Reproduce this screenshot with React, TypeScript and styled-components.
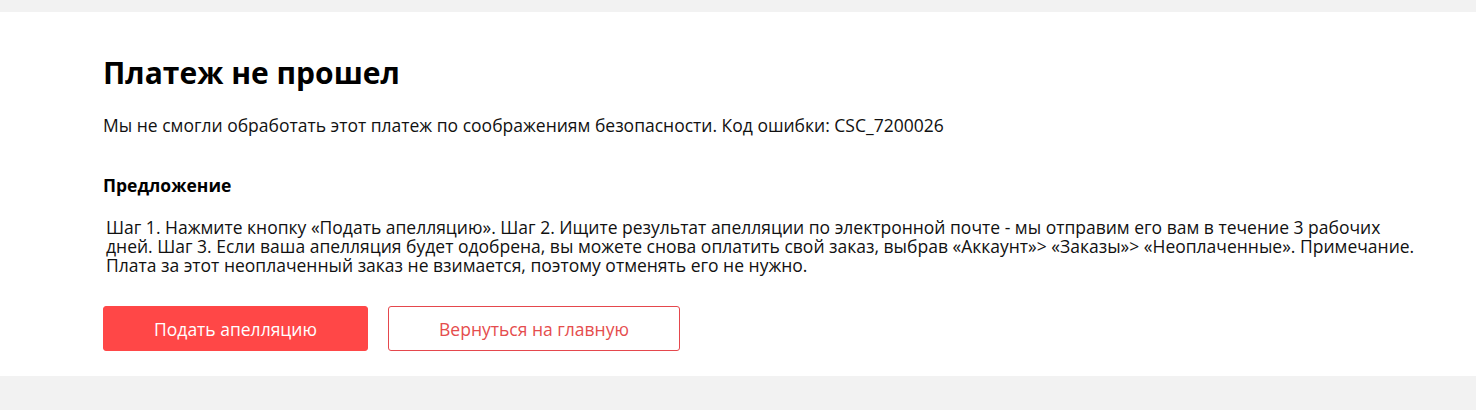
import styled, { createGlobalStyle } from 'styled-components';

const GlobalStyle = createGlobalStyle`
  html, body {
    margin: 0;
    padding: 0;
    background: #f2f2f2;
    font-family: 'Open Sans', 'Liberation Sans', sans-serif;
    color: #000;
  }
`;

const Page = styled.div`
  padding: 12px 0 34px;
`;

const Card = styled.section`
  background: #fff;
  padding: 41px 40px 25px 103px;
  height: 364px;
  box-sizing: border-box;
`;

const Title = styled.h1`
  margin: 0;
  font-size: 30px;
  line-height: 40px;
  font-weight: 700;
`;

const Message = styled.p`
  margin: 20px 0 0;
  font-size: 17.5px;
  line-height: 24px;
  color: #111;
`;

const SectionTitle = styled.h2`
  margin: 36px 0 0;
  font-size: 17.5px;
  line-height: 24px;
  font-weight: 700;
`;

const Suggestion = styled.p`
  margin: 21px 0 0;
  padding-left: 3px;
  max-width: 1316px;
  font-size: 17.5px;
  line-height: 19px;
  color: #111;
`;

const Actions = styled.div`
  display: flex;
  gap: 20px;
  margin-top: 31px;
`;

const Button = styled.button<{ $primary?: boolean }>`
  height: 45px;
  padding: 0;
  box-sizing: border-box;
  border-radius: 3px;
  font-family: inherit;
  font-size: 17.5px;
  cursor: pointer;
  width: ${(p) => (p.$primary ? '265px' : '292px')};
  background: ${(p) => (p.$primary ? '#ff4747' : '#fff')};
  color: ${(p) => (p.$primary ? '#fff' : '#e54d4d')};
  border: 1px solid ${(p) => (p.$primary ? '#ff4747' : '#e5484d')};
  padding-top: ${(p) => (p.$primary ? '0' : '1px')};
`;

export default function App() {
  return (
    <>
      <GlobalStyle />
      <Page>
        <Card>
          <Title>Платеж не прошел</Title>
          <Message>
            Мы не смогли обработать этот платеж по соображениям безопасности. Код ошибки: CSC_7200026
          </Message>
          <SectionTitle>Предложение</SectionTitle>
          <Suggestion>
            Шаг 1. Нажмите кнопку «Подать апелляцию». Шаг 2. Ищите результат апелляции по электронной
            почте - мы отправим его вам в течение 3 рабочих дней. Шаг 3. Если ваша апелляция будет
            одобрена, вы можете снова оплатить свой заказ, выбрав «Аккаунт»&gt; «Заказы»&gt;
            «Неоплаченные». Примечание. Плата за этот неоплаченный заказ не взимается, поэтому
            отменять его не нужно.
          </Suggestion>
          <Actions>
            <Button $primary>Подать апелляцию</Button>
            <Button>Вернуться на главную</Button>
          </Actions>
        </Card>
      </Page>
    </>
  );
}
